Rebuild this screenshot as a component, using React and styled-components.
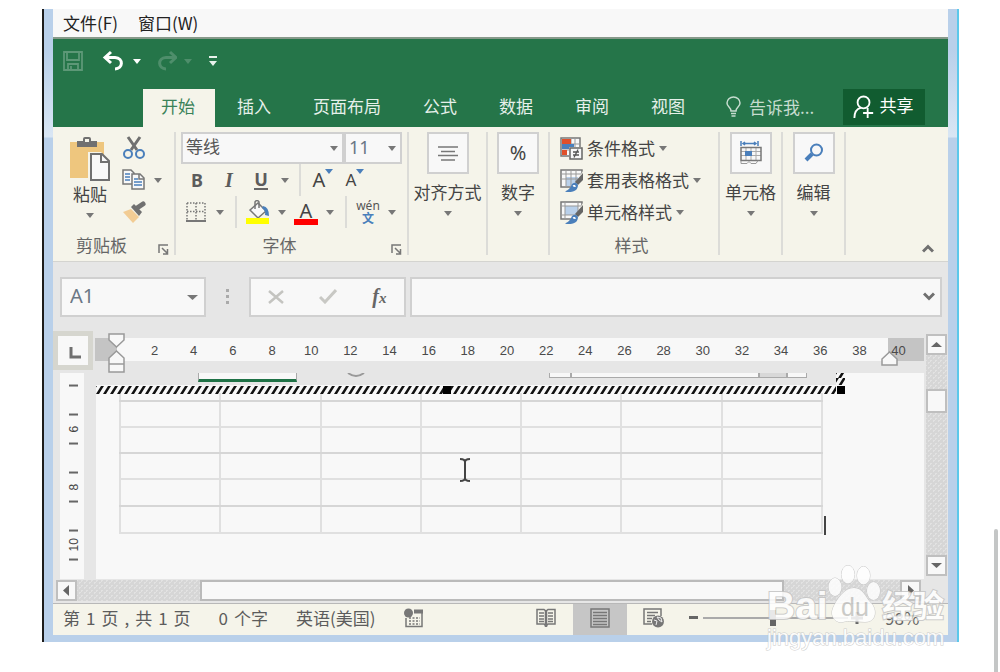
import React from "react";
import styled, { createGlobalStyle, css } from "styled-components";

const cjk = '"Noto Sans CJK SC", "Noto Sans", sans-serif';
const latin = '"Noto Sans", "Noto Sans CJK SC", sans-serif';

const c = {
  green: "#257549",
  share: "#115c30",
  cream: "#f5f4ea",
  chrome: "#e6e6e6",
  paper: "#f8f8f8",
  line: "#d0d0d0",
  ink: "#444",
  soft: "#666",
  icon: "#707070",
  blue: "#4a7fbb",
};

const GlobalStyle = createGlobalStyle`
  * { box-sizing: border-box; }
  html, body { margin: 0; background: #fff; }
  body { font: 17px/24px ${cjk}; color: ${c.ink}; }
  button, input, select { font: inherit; color: inherit; margin: 0; }
`;

/* ---------- window frame ---------- */

const Page = styled.div`
  position: relative;
  min-height: 100vh;
  padding: 9px 41px 30px 42px;
`;

const Frame = styled.main`
  position: relative;
  padding: 0 9px 7px;
  border-left: 2px solid #1c1c1c;
  border-right: 2px solid #5cc8ea;
  background: linear-gradient(#b9d0ea 0, #b9d0ea 40px, #d9e6f4 128px, #b9d0ea 129px, #b9d0ea);
`;

const PageScrollThumb = styled.div`
  position: absolute;
  right: 2px;
  bottom: 0;
  width: 4px;
  height: 143px;
  border-radius: 2px 2px 0 0;
  background: #c4c6c6;
`;

const PlainButton = styled.button`
  display: flex;
  align-items: center;
  justify-content: center;
  padding: 0;
  border: 0;
  background: transparent;
  flex: none;
`;

/* ---------- menu, quick access, tabs ---------- */

const MenuBar = styled.nav`
  display: flex;
  gap: 20px;
  height: 30px;
  padding: 2px 0 0 10px;
  background: ${c.paper};
  border-bottom: 2px solid #87998a;
`;

const MenuItem = styled(PlainButton)`
  height: 24px;
  color: #222;
`;

const QuickBar = styled.div`
  display: flex;
  align-items: center;
  gap: 16px;
  height: 50px;
  padding: 0 0 6px 9px;
  background: ${c.green};
`;

const QuickPair = styled.div`
  display: flex;
  align-items: center;
  gap: 7px;
`;

const QuickButton = styled(PlainButton)`
  width: ${(p) => p.$w}px;
  height: 28px;
`;

const TabBar = styled.div`
  display: flex;
  align-items: stretch;
  height: 38px;
  padding: 0 23px 0 90px;
  background: ${c.green};
`;

const Tabs = styled.div`
  display: flex;
  gap: 4px;
`;

const Tab = styled(PlainButton)`
  padding: 0 20px 5px 18px;
  color: #e6f0ea;
  ${(p) => p.$active && css`
    background: ${c.cream};
    color: #3a8259;
  `}
`;

const TellMe = styled(PlainButton)`
  gap: 8px;
  margin-left: 21px;
  padding-bottom: 2px;
  color: #c6dccf;
`;

const ShareButton = styled(PlainButton)`
  gap: 5px;
  width: 82px;
  height: 36px;
  margin-left: auto;
  padding: 0 2px 5px 0;
  background: ${c.share};
  color: #fff;
  svg { margin-top: 4px; }
`;

/* ---------- ribbon ---------- */

const Ribbon = styled.section`
  display: flex;
  padding: 5px 0 6px;
  background: ${c.cream};
  border-bottom: 1px solid #d4d4d0;
`;

const Group = styled.div`
  display: flex;
  flex-direction: column;
  flex: none;
  width: ${(p) => p.$w}px;
  height: 123px;
  border-right: 2px solid #dcdcd8;
`;

const RibbonEnd = styled.div`
  display: flex;
  flex: 1;
  align-items: flex-end;
  justify-content: flex-end;
  padding: 0 14px 2px 0;
`;

const GroupBody = styled.div`
  display: flex;
  flex-direction: ${(p) => (p.$row ? "row" : "column")};
  height: 103px;
  padding: 0 ${(p) => p.$pad || 0}px;
`;

const GroupLabel = styled.div`
  display: flex;
  align-items: center;
  height: 20px;
  padding-right: 5px;
  color: ${c.soft};
  span { flex: 1; text-align: center; padding-right: ${(p) => (p.$launcher ? 8 : 0)}px; }
`;

const Launcher = styled(PlainButton)`
  align-self: flex-end;
  height: 12px;
`;

const Row = styled.div`
  display: flex;
  align-items: center;
  height: 32px;
`;

const RowIcon = styled(PlainButton)`
  width: ${(p) => p.$w || 30}px;
  height: 32px;
`;

const Split = styled.span`
  flex: none;
  width: 2px;
  height: 32px;
  margin: 0 ${(p) => p.$m}px;
  background: #dcdcd8;
`;

const PasteButton = styled(PlainButton)`
  flex-direction: column;
  justify-content: flex-start;
  width: 40px;
  margin-left: 17px;
  padding-top: 4px;
  svg:last-child { margin-top: 7px; }
`;

const ToolColumn = styled.div`
  margin-left: 9px;
`;

const Combo = styled.label`
  position: relative;
  flex: ${(p) => (p.$w ? "none" : "1")};
  width: ${(p) => (p.$w ? p.$w + "px" : "auto")};
  height: ${(p) => p.$h || 32}px;
  > svg {
    position: absolute;
    right: ${(p) => p.$arrow || 6}px;
    top: 50%;
    margin-top: -2px;
    pointer-events: none;
  }
`;

const ComboSelect = styled.select`
  width: 100%;
  height: 100%;
  padding: 0 0 2px ${(p) => p.$pad || 3}px;
  appearance: none;
  border: 2px solid ${c.line};
  border-radius: 0;
  background: ${c.paper};
  font-family: ${latin};
  font-size: ${(p) => p.$size || 17}px;
  color: ${(p) => p.$tone || "#555"};
`;

const Glyph = styled.span`
  font: 700 18px/20px "Noto Sans", sans-serif;
  color: #5c5c5c;
  ${(p) => p.$italic && css`
    font-family: "Liberation Serif", serif;
    font-style: italic;
    font-size: 20px;
  `}
  ${(p) => p.$under && css`
    border-bottom: 2px solid #666;
    line-height: 18px;
  `}
`;

const FontColor = styled.span`
  display: block;
  width: 24px;
  margin-top: 2px;
  border-bottom: 6px solid #f00;
  font: 400 20px/17px "Noto Sans", sans-serif;
  text-align: center;
`;

const Phonetic = styled.span`
  display: flex;
  flex-direction: column;
  align-items: center;
  font: 12px/12px "Noto Sans", sans-serif;
  color: #555;
  b { font: 700 12px/12px ${cjk}; color: ${c.blue}; }
`;

const Sized = styled.span`
  display: flex;
  align-items: flex-start;
  font: 400 ${(p) => p.$size}px/24px "Noto Sans", sans-serif;
  svg { margin-top: 1px; }
`;

const BigButton = styled(PlainButton)`
  flex-direction: column;
  > svg { margin-top: 7px; }
`;

const BigIcon = styled.span`
  display: flex;
  align-items: center;
  justify-content: center;
  width: 42px;
  height: 42px;
  margin-bottom: 6px;
  border: 2px solid ${c.line};
  background: ${c.paper};
  font: 20px/24px "Noto Sans", sans-serif;
`;

const StyleButton = styled(PlainButton)`
  align-self: flex-start;
  gap: 4px;
  height: 32px;
`;

/* ---------- formula bar ---------- */

const FormulaBar = styled.section`
  display: flex;
  align-items: center;
  height: 69px;
  padding: 0 6px 0 7px;
  background: ${c.chrome};
`;

const Dots = styled.span`
  display: flex;
  flex-direction: column;
  gap: 3px;
  margin: 0 20px;
  i { width: 3px; height: 3px; background: #aaa; }
`;

const FormulaTools = styled.div`
  display: flex;
  align-items: center;
  justify-content: space-around;
  width: 157px;
  height: 40px;
  margin-right: 4px;
  border: 2px solid ${c.line};
  background: ${c.paper};
`;

const Fx = styled.span`
  font: italic 700 20px/24px "Liberation Serif", serif;
  color: #666;
  small { font-size: 15px; }
`;

const FormulaField = styled.div`
  display: flex;
  flex: 1;
  min-width: 0;
  height: 40px;
  border: 2px solid ${c.line};
  background: ${c.paper};
`;

const FormulaInput = styled.input`
  flex: 1;
  min-width: 0;
  padding: 0 8px;
  border: 0;
  background: transparent;
`;

const ExpandButton = styled(PlainButton)`
  width: 22px;
`;

/* ---------- document ---------- */

const Workspace = styled.section`
  display: flex;
  background: ${c.chrome};
`;

const DocColumn = styled.div`
  flex: 1;
  min-width: 0;
`;

const RulerRow = styled.div`
  display: flex;
  height: 42px;
`;

const TabStop = styled(PlainButton)`
  width: 40px;
  height: 39px;
  margin-right: 2px;
  padding: 5px 0 0 4px;
  border: 5px solid #d6d6cf;
  background: ${c.paper};
`;

const Ruler = styled.div`
  position: relative;
  display: flex;
  flex: 1;
  height: 23px;
  margin-top: 7px;
  padding: 0 6px 0 40px;
  background: linear-gradient(to right, #c4c4c4 22px, ${c.paper} 22px, ${c.paper} calc(100% - 36px), #c4c4c4 calc(100% - 36px));
  font: 13px/25px "Liberation Sans", sans-serif;
  color: #4a4a4a;
  > span { flex: 1; text-align: center; }
`;

const Marker = styled.svg`
  position: absolute;
  ${(p) => (p.$end ? "right: 26px; top: 13px;" : "left: 13px; top: -5px;")}
`;

const DocRow = styled.div`
  display: flex;
  align-items: stretch;
  padding-left: 7px;
`;

const SideRuler = styled.div`
  display: flex;
  flex-direction: column;
  width: 24px;
  margin-right: 12px;
  padding: 5px 0 12px;
  background: ${c.paper};
`;

const SideMark = styled.span`
  display: flex;
  flex: 1;
  align-items: center;
  justify-content: center;
  writing-mode: vertical-rl;
  transform: rotate(180deg);
  padding-right: 3px;
  font: 12px/14px "Liberation Sans", sans-serif;
  color: #444;
  i { width: 9px; height: 2px; background: #666; }
`;

const Sheet = styled.div`
  position: relative;
  flex: 1;
  min-width: 0;
  padding-bottom: 45px;
  background: ${c.paper};
`;

const Embedded = styled.div`
  display: flex;
  width: 740px;
  height: 12px;
  background: ${c.chrome};
  padding-left: 102px;
`;

const EmbedTab = styled.span`
  width: 99px;
  height: 9px;
  border: solid #aaa;
  border-width: 0 1px;
  border-bottom: 3px solid #1f7246;
  background: ${c.paper};
`;

const EmbedArc = styled.svg`
  margin: 0 184px 0 50px;
`;

const EmbedBox = styled.span`
  width: ${(p) => p.$w}px;
  height: 5px;
  border: 1px solid #aaa;
  border-top: 0;
  background: ${(p) => (p.$fill ? "#d8d8d8" : c.paper)};
`;

const Hatch = styled.svg`
  position: absolute;
  left: 0;
  top: 0;
`;

const Grid = styled.table`
  width: 704px;
  margin: 8px 0 0 23px;
  border-collapse: collapse;
  table-layout: fixed;
  td {
    height: 26px;
    padding: 0;
    border: 2px solid #e0e0e0;
  }
  tr:nth-child(odd) td { border-bottom-color: #d6d6d6; }
  tr:first-child td { height: 8px; border-top: 0; }
  tr:last-child td { border-bottom-color: #e0e0e0; height: 27px; }
  tr:nth-child(5) td { height: 27px; }
`;

const Caret = styled.span`
  position: absolute;
  left: 728px;
  top: 143px;
  width: 2px;
  height: 19px;
  background: #444;
`;

const Pointer = styled.svg`
  position: absolute;
  left: 362px;
  top: 84px;
`;

const track = css`
  background: radial-gradient(circle, #e2e2e2 1px, transparent 1px) 0 0 / 5px 5px,
    radial-gradient(circle, #e2e2e2 1px, transparent 1px) 2px 3px / 5px 5px, #d6d6d6;
`;

const VScroll = styled.div`
  display: flex;
  flex-direction: column;
  width: 24px;
  padding: 3px 1px 3px 2px;
`;

const ScrollButton = styled(PlainButton)`
  width: 21px;
  height: 21px;
  border: 2px solid #bfbfbf;
  background: ${c.paper};
`;

const VTrack = styled.div`
  ${track}
  flex: ${(p) => (p.$h ? "none" : "1")};
  height: ${(p) => (p.$h ? p.$h + "px" : "auto")};
`;

const VThumb = styled.div`
  height: 24px;
  border: 2px solid #bfbfbf;
  background: ${c.paper};
`;

const HScroll = styled.div`
  display: flex;
  height: 25px;
  padding: 1px 27px 2px 3px;
  background: ${c.chrome};
  border-bottom: 1px solid #b8b8b8;
`;

const HTrack = styled.div`
  ${track}
  flex: ${(p) => p.$grow} 1 0;
`;

const HThumb = styled.div`
  flex: 583 1 0;
  border: 2px solid #bababa;
  background: ${c.paper};
`;

/* ---------- status bar ---------- */

const StatusBar = styled.footer`
  display: flex;
  align-items: center;
  height: 31px;
  padding: 0 27px 4px 10px;
  background: ${c.cream};
  color: #5c5c5c;
`;

const StatusText = styled.span`
  display: flex;
  gap: 6px;
  margin-right: 28px;
`;

const ViewGroup = styled.div`
  display: flex;
  align-items: center;
  margin: 0 6px 0 auto;
`;

const ViewButton = styled(PlainButton)`
  width: 54px;
  height: 31px;
  margin-bottom: -4px;
  padding-bottom: 4px;
  background: ${(p) => (p.$active ? "#c6c6c6" : "transparent")};
`;

const ZoomStep = styled(PlainButton)`
  width: 12px;
  height: 24px;
`;

const Slider = styled.input`
  appearance: none;
  width: 145px;
  height: 16px;
  margin: 0 3px 0 4px !important;
  background: linear-gradient(#aaa, #aaa) center / 100% 2px no-repeat;
  &::-webkit-slider-thumb {
    appearance: none;
    width: 6px;
    height: 16px;
    background: #666;
  }
`;

const ZoomValue = styled.output`
  margin-left: 22px;
  width: 36px;
  color: #666;
`;

const Watermark = styled.svg`
  position: absolute;
  right: 8px;
  bottom: -12px;
  opacity: 0.85;
`;

/* ---------- drawings ---------- */

const Down = ({ w = 8, fill = "#777" }) => (
  <svg width={w} height="5" viewBox="0 0 8 5" preserveAspectRatio="none"><path d="M0 0h8L4 5z" fill={fill} /></svg>
);

const LaunchIcon = () => (
  <svg width="11" height="11" fill="none" stroke="#777" strokeWidth="1.5">
    <path d="M1 9V1h9M4 4l5 5M9.5 5v5H5" />
  </svg>
);

const SaveIcon = () => (
  <svg width="22" height="22" fill="none" stroke="#5d9877" strokeWidth="1.800">
    <path d="M2 2h18v18H2zM5 2v8h12V2M6 20v-6h10v6M9 16v3" />
  </svg>
);

const UndoIcon = ({ flip, color }) => (
  <svg width="22" height="22" fill="none" stroke={color} strokeWidth="3">
    <g transform={flip ? "translate(22 0) scale(-1 1)" : undefined}>
      <path d="M9 2L3 7.500L9 13M3 7.500H13C22 8 21 19 13 19" />
    </g>
  </svg>
);

const MoreIcon = () => (
  <svg width="10" height="10" fill="#e8f2ec"><path d="M1 0h8v2H1zM1 5h8L5 10z" /></svg>
);

const BulbIcon = () => (
  <svg width="15" height="22" fill="none" stroke="#c6dccf" strokeWidth="1.500">
    <path d="M5 15C5 11 1 11 1 7a6.500 6 0 0 1 13 0c0 4-4 4-4 8zM5 17.500h5M5.500 20h4" />
  </svg>
);

const PersonIcon = () => (
  <svg width="22" height="24" viewBox="0 0 24 26" fill="none" stroke="#fff" strokeWidth="2">
    <circle cx="11.500" cy="8" r="6.500" /><path d="M1.500 25c0-7 3-10 7-11M16 14v11M11 19.500h11" />
  </svg>
);

const PasteIcon = () => (
  <svg width="42" height="46">
    <path d="M1 6h34v36H1z" fill="#eec67e" />
    <path d="M8 11V5h6V3q0-2 2-2h4q2 0 2 2v2h6v6zM16 3v3h4V3z" fill="#707070" fillRule="evenodd" />
    <path d="M19 16h13l9 9v20H19z" fill={c.cream} />
    <path d="M22 18h11l7 7v19H22z" fill="#f8f8f8" stroke="#707070" strokeWidth="2" /><path d="M32 18v8h8" fill="none" stroke="#707070" strokeWidth="2" />
  </svg>
);

const CutIcon = () => (
  <svg width="22" height="24" fill="none">
    <path d="M5 1l9 13M17 1L8 14" stroke="#707070" strokeWidth="3" />
    <circle cx="5" cy="18" r="4" stroke={c.blue} strokeWidth="2" /><circle cx="17" cy="18" r="4" stroke={c.blue} strokeWidth="2" />
  </svg>
);

const CopyIcon = () => (
  <svg width="24" height="22" fill="#f8f8f8" stroke="#777" strokeWidth="1.500">
    <path d="M1 1h8l3 3v11H1z" /><path d="M10 5h8l4 4v11H10z" /><path d="M17 5v5h5" fill="none" />
    <path d="M3 5h5M3 8h5M3 11h5M12 10h4M12 13h8M12 16h8" stroke={c.blue} />
  </svg>
);

const BrushIcon = () => (
  <svg width="25" height="23">
    <path d="M1 11l8-3 8 8-6 6z" fill="#f2cc94" /><path d="M9 6l3-3 8 8-3 4z" fill="#707070" />
    <path d="M15 7l6-4" stroke="#707070" strokeWidth="5" strokeLinecap="round" />
  </svg>
);

const BorderIcon = () => (
  <svg width="20" height="20" fill="none" stroke="#777" strokeWidth="1.500">
    <path d="M1 1h18M1 1v17M19 1v17M10 1v17M1 9.500h18" strokeDasharray="1.500 1.500" /><path d="M0 19h20" strokeWidth="2" />
  </svg>
);

const FillIcon = () => (
  <svg width="24" height="24">
    <path d="M4 10l8-7 8 8-8 7z" fill="#f8f8f8" stroke="#777" strokeWidth="1.500" />
    <path d="M9 9V2q2-3 4 0v6" fill="none" stroke="#777" strokeWidth="1.500" />
    <path d="M17 6q6 1 6 10l-4-1q1-4-3-7z" fill={c.blue} /><path d="M0 18h23v6H0z" fill="#ff0" />
  </svg>
);

const CenterIcon = () => (
  <svg width="22" height="16" stroke="#777" strokeWidth="1.500"><path d="M1 2h20M4 6.500h14M1 10.500h20M4 15h14" /></svg>
);

const CondIcon = () => (
  <svg width="23" height="23" fill="none">
    <path d="M1 1h19v18H1z" fill="#f8f8f8" stroke="#777" strokeWidth="1.500" />
    <path d="M1 7h19M1 13h19M11 1v18M15 1v18" stroke="#999" />
    <path d="M2 2h9v5H2zM2 13h5v5H2z" fill="#e0502a" /><path d="M2 7h12v5H2z" fill={c.blue} />
    <path d="M9 10h14v13H9z" fill={c.cream} />
    <path d="M10 11h12v11H10z" fill="#f8f8f8" stroke="#666" strokeWidth="1.500" />
    <path d="M13 15h6M13 18h6M18 12.500l-4 8" stroke="#555" strokeWidth="1.300" />
  </svg>
);

const TableIcon = ({ single }) => (
  <svg width="23" height="23" fill="none">
    <path d="M1 1h21v17H1z" fill="#f8f8f8" stroke="#777" strokeWidth="1.500" />
    {single ? <path d="M5 5h13v9H5z" fill="#b9d0ea" /> : <path d="M6 8h12v9H6z" fill="#b9d0ea" />}
    <path d={single ? "M1 5h21M5 1v17M18 1v17M1 14h21" : "M1 5h21M1 10h21M6 1v17M11 1v17M16 1v17"} stroke="#999" />
    <path d="M23 2v20H10l7-10z" fill={c.cream} />
    <path d="M23 4v7l-5 5-3-3z" fill="#666" /><path d="M12 15q4-3 6 1 0 5-5 6.500-5 1-8 0 5-2 7-7.500z" fill={c.blue} />
    <path d="M13 17q2-1 2 1" stroke="#fff" strokeWidth="1.500" />
  </svg>
);

const CellsIcon = () => (
  <svg width="22" height="24" fill="none">
    <path d="M1 10.500h20M1 14.500h20M6 6v13M11 6v13M16 6v13" stroke="#aaa" />
    <path d="M1 6.500h20v13H1z" stroke="#777" strokeWidth="1.500" />
    <path d="M1 20v2.500h6l2-2 2 2h5l2-3" stroke="#999" />
    <path d="M5 10h7v5H5z" fill={c.blue} />
    <path d="M1 0v5M18 0v5M3 2.500h13M5 1L3 2.500l2 1.500M14 1l2 1.500-2 1.500" stroke={c.blue} strokeWidth="1.500" />
  </svg>
);

const FindIcon = () => (
  <svg width="20" height="20" fill="none" stroke={c.blue}>
    <circle cx="12.500" cy="7" r="5.500" strokeWidth="2" /><path d="M8 11l-6 6" strokeWidth="4" />
  </svg>
);

const Chevron = ({ up }) => (
  <svg width="12" height="9" fill="none" stroke="#707070" strokeWidth="3"><path d={up ? "M1 7.500L6 2.500l5 5" : "M1 1.500l5 5 5-5"} /></svg>
);

const Arrow = ({ dir }) => (
  <svg width="11" height="11" fill="#666">
    <path d={{ up: "M0 8h11L5.500 3z", down: "M0 3h11L5.500 8z", left: "M8 0v11L2 5.500z", right: "M3 0v11l6-5.500z" }[dir]} />
  </svg>
);

const MacroIcon = () => (
  <svg width="20" height="20" fill="none" stroke="#777">
    <path d="M2 10v8.500h16V2" strokeWidth="1.500" /><circle cx="4.500" cy="5" r="4.500" fill="#777" stroke="none" />
    <path d="M10 3.500h9" strokeWidth="4" /><path d="M5 10h11M5 13h11M5 16h11" strokeWidth="1.500" strokeDasharray="2 1.500" />
  </svg>
);

const BookIcon = () => (
  <svg width="20" height="20" fill="none" stroke="#777" strokeWidth="1.500">
    <path d="M1 1.500h7l2 1.500 2-1.500h7V16h-7l-2 2-2-2H1z" /><path d="M10 2v17" strokeWidth="2.500" />
    <path d="M3 5h5M3 8h5M3 11h5M3 13.500h5M12 5h5M12 8h5M12 11h5M12 13.500h5" />
  </svg>
);

const PageIcon = () => (
  <svg width="20" height="20" fill="none" stroke="#777" strokeWidth="1.500">
    <path d="M1 1h18v18H1zM3 4.500h14M3 7.500h14M3 10.500h14M3 13.500h14M3 16.500h14" />
  </svg>
);

const WebIcon = () => (
  <svg width="22" height="20" fill="none" stroke="#777" strokeWidth="1.500">
    <path d="M9 16H1V1h17v7M4 4.500h11M4 7.500h8M4 10.500h5M4 13.500h4" />
    <circle cx="15" cy="13.500" r="6" fill="#777" stroke="none" /><path d="M11 12l3 1-1 4M14 9l4 1 1 4-3-2z" stroke="#eee" strokeWidth="1" />
  </svg>
);

const Hatching = () => (
  <Hatch width="750" height="22" aria-hidden="true">
    <defs>
      <pattern id="hatch" width="7" height="8" y="13" patternUnits="userSpaceOnUse">
        <path d="M0 8h3l5-8H5zM-7 8h3l5-8h-3z" fill="#111" />
      </pattern>
    </defs>
    <path d="M0 13h740v8H0zM740 0h9v12h-9z" fill="url(#hatch)" />
    <path d="M347 13h8v8h-8zM741 13h8v8h-8z" fill="#000" />
  </Hatch>
);

const BaiduMark = () => (
  <Watermark width="186" height="98" viewBox="763 556 186 98" aria-hidden="true" fill="#fff" stroke="#c4c4c4" strokeWidth="1" paintOrder="stroke">
    <ellipse cx="835" cy="587" rx="6.500" ry="9" /><ellipse cx="848" cy="574.500" rx="6.500" ry="9" />
    <ellipse cx="863.500" cy="575.500" rx="6.500" ry="9" /><ellipse cx="873.500" cy="591" rx="6.500" ry="9" />
    <path d="M854 588c9 0 11 9 17 15s6 19-6 19-16-2-22 0-14-5-10-14 11-20 21-20z" />
    <text x="767" y="619" fontSize="39" fontWeight="700" fontFamily="Liberation Sans, sans-serif" strokeWidth="2">Bai</text>
    <text x="841" y="616" fontSize="25" fontFamily="Liberation Sans, sans-serif" fill="#c4c4c2" stroke="none">du</text>
    <text x="882" y="617" fontSize="31" fontWeight="700" fontFamily="Noto Sans CJK SC, sans-serif" strokeWidth="2">经验</text>
    <text x="767" y="645" fontSize="22" fontFamily="Liberation Sans, sans-serif" strokeWidth="1">jingyan.baidu.com</text>
  </Watermark>
);

/* ---------- parts ---------- */

const tabs = ["开始", "插入", "页面布局", "公式", "数据", "审阅", "视图"];
const rulerNumbers = Array.from({ length: 20 }, (_, i) => (i + 1) * 2);
const sideMarks = ["-", "", "-", "6", "-", "", "-", "8", "-", "", "-", "10", "-"];

const IconCaret = ({ w = 18, label }) => <RowIcon $w={w} aria-label={label}><Down /></RowIcon>;

const BigGroup = ({ w, label, children }) => (
  <Group $w={w}>
    <BigButton><BigIcon>{children}</BigIcon>{label}<Down /></BigButton>
  </Group>
);

const Label = ({ children, launcher }) => (
  <GroupLabel $launcher={launcher}>
    <span>{children}</span>{launcher && <Launcher aria-label={children + "设置"}><LaunchIcon /></Launcher>}
  </GroupLabel>
);

const Spaced = ({ parts }) => (
  <StatusText>{parts.map((p, i) => <span key={i}>{p}</span>)}</StatusText>
);

export default function App() {
  return (
    <Page>
      <GlobalStyle />
      <Frame>
        <MenuBar><MenuItem>文件(F)</MenuItem><MenuItem>窗口(W)</MenuItem></MenuBar>
        <QuickBar>
          <QuickButton $w={22} aria-label="保存"><SaveIcon /></QuickButton>
          <QuickPair>
            <QuickButton $w={26} aria-label="撤消"><UndoIcon color="#fff" /></QuickButton>
            <QuickButton $w={8} aria-label="撤消列表"><Down fill="#fff" /></QuickButton>
          </QuickPair>
          <QuickPair>
            <QuickButton $w={20} aria-label="重做"><UndoIcon flip color="#4e8e6b" /></QuickButton>
            <QuickButton $w={8} aria-label="重做列表"><Down fill="#4e8e6b" /></QuickButton>
          </QuickPair>
          <QuickButton $w={10} aria-label="自定义"><MoreIcon /></QuickButton>
        </QuickBar>
        <TabBar>
          <Tabs role="tablist">
            {tabs.map((t, i) => <Tab key={t} role="tab" aria-selected={i === 0} $active={i === 0}>{t}</Tab>)}
          </Tabs>
          <TellMe><BulbIcon />告诉我...</TellMe>
          <ShareButton><PersonIcon />共享</ShareButton>
        </TabBar>

        <Ribbon>
          <Group $w={123}>
            <GroupBody $row>
              <PasteButton><PasteIcon />粘贴<Down /></PasteButton>
              <ToolColumn>
                <Row><RowIcon aria-label="剪切"><CutIcon /></RowIcon></Row>
                <Row><RowIcon aria-label="复制"><CopyIcon /></RowIcon><IconCaret label="复制选项" /></Row>
                <Row><RowIcon aria-label="格式刷"><BrushIcon /></RowIcon></Row>
              </ToolColumn>
            </GroupBody>
            <Label launcher>剪贴板</Label>
          </Group>

          <Group $w={233}>
            <GroupBody $pad={5}>
              <Row>
                <Combo><ComboSelect aria-label="字体"><option>等线</option></ComboSelect><Down /></Combo>
                <Combo $w={58}><ComboSelect aria-label="字号" $size={18} $tone="#6b7785"><option>11</option></ComboSelect><Down /></Combo>
              </Row>
              <Row>
                <RowIcon $w={32} aria-label="加粗"><Glyph>B</Glyph></RowIcon>
                <RowIcon $w={32} aria-label="倾斜"><Glyph $italic>I</Glyph></RowIcon>
                <RowIcon $w={32} aria-label="下划线"><Glyph $under>U</Glyph></RowIcon>
                <IconCaret w={16} label="下划线选项" />
                <Split $m={6} />
                <RowIcon $w={32} aria-label="增大字号"><Sized $size={20}>A<Down fill={c.blue} /></Sized></RowIcon>
                <RowIcon $w={32} aria-label="减小字号"><Sized $size={17}>A<Down fill={c.blue} /></Sized></RowIcon>
              </Row>
              <Row>
                <RowIcon aria-label="边框"><BorderIcon /></RowIcon><IconCaret label="边框选项" />
                <Split $m={6} />
                <RowIcon aria-label="填充颜色"><FillIcon /></RowIcon><IconCaret label="填充选项" />
                <RowIcon aria-label="字体颜色"><FontColor>A</FontColor></RowIcon><IconCaret label="颜色选项" />
                <Split $m={6} />
                <RowIcon aria-label="拼音"><Phonetic>wén<b>文</b></Phonetic></RowIcon><IconCaret label="拼音选项" />
              </Row>
            </GroupBody>
            <Label launcher>字体</Label>
          </Group>

          <BigGroup w={79} label="对齐方式"><CenterIcon /></BigGroup>
          <BigGroup w={62} label="数字">%</BigGroup>

          <Group $w={170}>
            <GroupBody $pad={10}>
              <StyleButton><CondIcon />条件格式<Down /></StyleButton>
              <StyleButton><TableIcon />套用表格格式<Down /></StyleButton>
              <StyleButton><TableIcon single />单元格样式<Down /></StyleButton>
            </GroupBody>
            <Label>样式</Label>
          </Group>

          <BigGroup w={63} label="单元格"><CellsIcon /></BigGroup>
          <BigGroup w={63} label="编辑"><FindIcon /></BigGroup>
          <RibbonEnd><PlainButton aria-label="折叠功能区"><Chevron up /></PlainButton></RibbonEnd>
        </Ribbon>

        <FormulaBar>
          <Combo $w={146} $h={40} $arrow={8}>
            <ComboSelect aria-label="名称框" $size={20} $pad={8} $tone="#6b7785"><option>A1</option></ComboSelect><Down w={11} />
          </Combo>
          <Dots><i /><i /><i /></Dots>
          <FormulaTools>
            <PlainButton aria-label="取消"><svg width="16" height="14" stroke="#c4c4c0" strokeWidth="2.500"><path d="M1 1l14 12M15 1L1 13" /></svg></PlainButton>
            <PlainButton aria-label="输入"><svg width="18" height="15" fill="none" stroke="#c8c8c4" strokeWidth="3"><path d="M1 8l5 5L17 1" /></svg></PlainButton>
            <PlainButton aria-label="插入函数"><Fx>f<small>x</small></Fx></PlainButton>
          </FormulaTools>
          <FormulaField>
            <FormulaInput aria-label="编辑栏" />
            <ExpandButton aria-label="展开编辑栏"><Chevron /></ExpandButton>
          </FormulaField>
        </FormulaBar>

        <Workspace>
          <DocColumn>
            <RulerRow>
              <TabStop aria-label="制表符"><svg width="12" height="12" fill="none" stroke="#707070" strokeWidth="3"><path d="M2 0v10h10" /></svg></TabStop>
              <Ruler>
                {rulerNumbers.map((n) => <span key={n}>{n}</span>)}
                <Marker width="17" height="41" fill="#f8f8f8" stroke="#999" strokeWidth="1.500">
                  <path d="M1 1h15v6l-7.500 7L1 7zM1 31v-6l7.500-7 7.500 7v14H1zM1 31h15" />
                </Marker>
                <Marker $end width="17" height="16" fill="#f8f8f8" stroke="#999" strokeWidth="1.500">
                  <path d="M1 14V8l7.500-7L16 8v6z" />
                </Marker>
              </Ruler>
            </RulerRow>
            <DocRow>
              <SideRuler>
                {sideMarks.map((m, i) => <SideMark key={i}>{m === "-" ? <i /> : m}</SideMark>)}
              </SideRuler>
              <Sheet>
                <Embedded>
                  <EmbedTab />
                  <EmbedArc width="18" height="6" fill="none" stroke="#999" strokeWidth="2"><path d="M1 0q8 6 16 0" /></EmbedArc>
                  <EmbedBox $w={22} /><EmbedBox $w={188} /><EmbedBox $w={28} $fill /><EmbedBox $w={20} />
                </Embedded>
                <Grid><tbody>
                  {[0, 1, 2, 3, 4, 5].map((r) => <tr key={r}>{[0, 1, 2, 3, 4, 5, 6].map((k) => <td key={k} />)}</tr>)}
                </tbody></Grid>
                <Hatching />
                <Caret />
                <Pointer width="14" height="26" fill="none" stroke="#444" strokeWidth="2"><path d="M2 2q5 0 5 3 0-3 5-3M2 24q5 0 5-3 0 3 5 3M7 5v16" /></Pointer>
              </Sheet>
            </DocRow>
          </DocColumn>
          <VScroll>
            <ScrollButton aria-label="向上滚动"><Arrow dir="up" /></ScrollButton>
            <VTrack $h={34} /><VThumb /><VTrack />
            <ScrollButton aria-label="向下滚动"><Arrow dir="down" /></ScrollButton>
          </VScroll>
        </Workspace>
        <HScroll>
          <ScrollButton aria-label="向左滚动"><Arrow dir="left" /></ScrollButton>
          <HTrack $grow={123} /><HThumb /><HTrack $grow={116} />
          <ScrollButton aria-label="向右滚动"><Arrow dir="right" /></ScrollButton>
        </HScroll>

        <StatusBar>
          <Spaced parts={["第", "1", "页", ",", "共", "1", "页"]} />
          <Spaced parts={["0", "个字"]} />
          <Spaced parts={["英语(美国)"]} />
          <MacroIcon />
          <ViewGroup>
            <ViewButton aria-label="阅读视图"><BookIcon /></ViewButton>
            <ViewButton $active aria-label="页面视图"><PageIcon /></ViewButton>
            <ViewButton aria-label="Web 版式"><WebIcon /></ViewButton>
          </ViewGroup>
          <ZoomStep aria-label="缩小"><svg width="9" height="3"><path d="M0 0h9v3H0z" fill="#666" /></svg></ZoomStep>
          <Slider type="range" min="0" max="100" defaultValue="48" aria-label="缩放" />
          <ZoomStep aria-label="放大"><svg width="12" height="12" stroke="#666" strokeWidth="3"><path d="M0 6h12M6 0v12" /></svg></ZoomStep>
          <ZoomValue>98%</ZoomValue>
        </StatusBar>
        <BaiduMark />
      </Frame>
      <PageScrollThumb />
    </Page>
  );
}
